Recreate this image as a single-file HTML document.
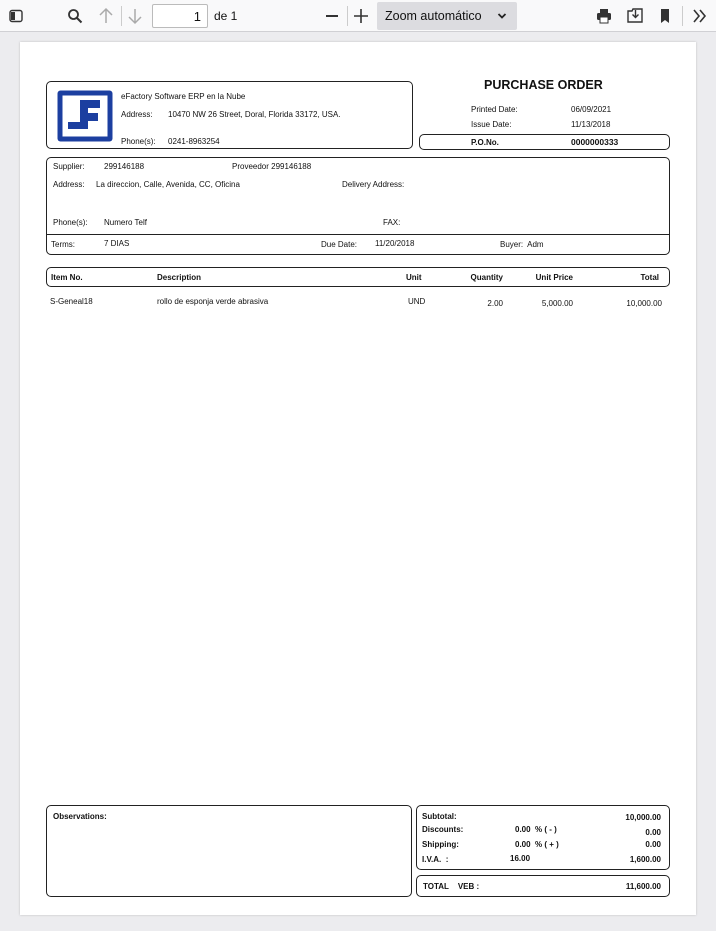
<!DOCTYPE html>
<html><head><meta charset="utf-8"><style>
*{margin:0;padding:0;box-sizing:border-box}
body{width:716px;height:931px;background:#ececef;font-family:"Liberation Sans",sans-serif;position:relative;overflow:hidden;color:#111}
.tb{position:absolute;left:0;top:0;width:716px;height:32px;background:#f9f9fa;border-bottom:1px solid #d0d0d4}
.pg{position:absolute;left:20px;top:42px;width:676px;height:873px;background:#fff;box-shadow:0 0 2px #bbb}
.a{position:absolute;white-space:nowrap;font-size:8px;line-height:9px}
.b{font-weight:bold}
.bx{position:absolute;border:1px solid #222;border-radius:5px}
.ic{position:absolute}
</style></head><body>
<div class="tb">
<svg class="ic" style="left:9px;top:9px" width="14" height="14"><rect x="1" y="1.5" width="12" height="11" rx="2" fill="none" stroke="#333" stroke-width="1.4"/><rect x="2" y="3" width="4" height="8" fill="#333"/></svg>
<svg class="ic" style="left:67px;top:8px" width="16" height="16"><circle cx="6.5" cy="6.5" r="4.5" fill="none" stroke="#333" stroke-width="1.8"/><path d="M10 10l4.5 4.5" stroke="#333" stroke-width="2"/></svg>
<svg class="ic" style="left:98px;top:7px" width="16" height="18"><path d="M8 16V2M2 8l6-6 6 6" fill="none" stroke="#aaa" stroke-width="1.5"/></svg>
<div class="ic" style="left:121px;top:6px;width:1px;height:20px;background:#ccc"></div>
<svg class="ic" style="left:127px;top:7px" width="16" height="18"><path d="M8 2v14M2 10l6 6 6-6" fill="none" stroke="#aaa" stroke-width="1.5"/></svg>
<div class="ic" style="left:152px;top:4px;width:56px;height:24px;background:#fff;border:1px solid #bbb;border-radius:2px;font-size:13px;text-align:right;padding:4px 6px 0 0">1</div>
<div class="ic" style="left:214px;top:9px;font-size:12px">de 1</div>
<div class="ic" style="left:326px;top:15px;width:12px;height:1.6px;background:#333"></div>
<div class="ic" style="left:347px;top:6px;width:1px;height:20px;background:#ccc"></div>
<svg class="ic" style="left:353px;top:8px" width="16" height="16"><path d="M8 1v14M1 8h14" stroke="#333" stroke-width="1.6"/></svg>
<div class="ic" style="left:377px;top:2px;width:140px;height:28px;background:#dcdce0;border-radius:2px;font-size:12.5px;padding:7px 0 0 8px">Zoom automático</div>
<svg class="ic" style="left:497px;top:12px" width="10" height="8"><path d="M1.5 2l3.5 3.5 3.5-3.5" fill="none" stroke="#222" stroke-width="1.8"/></svg>
<svg class="ic" style="left:596px;top:8px" width="16" height="16"><rect x="4" y="1" width="8" height="4" fill="#333"/><rect x="1" y="5" width="14" height="7" rx="1.5" fill="#333"/><rect x="4" y="9" width="8" height="6" fill="#fff" stroke="#333"/></svg>
<svg class="ic" style="left:627px;top:7px" width="17" height="17"><path d="M1 4h4l1 -2h9v13H1z" fill="none" stroke="#333" stroke-width="1.4"/><path d="M8.5 3v7M5.5 7.5l3 3 3-3" fill="none" stroke="#333" stroke-width="1.4"/></svg>
<svg class="ic" style="left:659px;top:8px" width="12" height="16"><path d="M2 1h8v14l-4-3-4 3z" fill="#333"/></svg>
<div class="ic" style="left:682px;top:6px;width:1px;height:20px;background:#ccc"></div>
<svg class="ic" style="left:692px;top:9px" width="16" height="14"><path d="M2 1l5 6-5 6M8 1l5 6-5 6" fill="none" stroke="#333" stroke-width="1.6"/></svg>
</div>

<div class="pg"></div>
<div class="bx" style="left:46px;top:81px;width:367px;height:68px"></div>
<svg class="ic" style="left:56px;top:89px" width="58" height="54"><rect x="1.5" y="1.5" width="55" height="51" rx="3" fill="#1c3fa0"/><rect x="6.5" y="6.5" width="45" height="41" fill="#fff"/><path d="M24 11h20v8H32v5h10v8H32v8H12v-7h12z" fill="#1c3fa0"/></svg>
<div class="a" style="left:121px;top:92px">eFactory Software ERP en la Nube</div>
<div class="a" style="left:121px;top:110px">Address:</div>
<div class="a" style="left:168px;top:110px">10470 NW 26 Street, Doral, Florida 33172, USA.</div>
<div class="a" style="left:121px;top:137px">Phone(s):</div>
<div class="a" style="left:168px;top:137px">0241-8963254</div>

<div class="a b" style="left:484px;top:78px;font-size:12.5px;line-height:15px">PURCHASE ORDER</div>
<div class="a" style="left:471px;top:105px">Printed Date:</div>
<div class="a" style="left:571px;top:105px">06/09/2021</div>
<div class="a" style="left:471px;top:120px">Issue Date:</div>
<div class="a" style="left:571px;top:120px">11/13/2018</div>
<div class="bx" style="left:419px;top:134px;width:251px;height:16px"></div>
<div class="a b" style="left:471px;top:138px">P.O.No.</div>
<div class="a b" style="left:571px;top:138px;font-size:8.5px">0000000333</div>

<div class="bx" style="left:46px;top:157px;width:624px;height:98px"></div>
<div class="ic" style="left:47px;top:234px;width:622px;height:1px;background:#222"></div>
<div class="a" style="left:53px;top:162px">Supplier:</div>
<div class="a" style="left:104px;top:162px">299146188</div>
<div class="a" style="left:232px;top:162px">Proveedor 299146188</div>
<div class="a" style="left:53px;top:180px">Address:</div>
<div class="a" style="left:96px;top:180px">La direccion, Calle, Avenida, CC, Oficina</div>
<div class="a" style="left:342px;top:180px">Delivery Address:</div>
<div class="a" style="left:53px;top:218px">Phone(s):</div>
<div class="a" style="left:104px;top:218px">Numero Telf</div>
<div class="a" style="left:383px;top:218px">FAX:</div>
<div class="a" style="left:51px;top:240px">Terms:</div>
<div class="a" style="left:104px;top:239px">7 DIAS</div>
<div class="a" style="left:321px;top:240px">Due Date:</div>
<div class="a" style="left:375px;top:239px">11/20/2018</div>
<div class="a" style="left:500px;top:240px">Buyer:&nbsp; Adm</div>

<div class="bx" style="left:46px;top:267px;width:624px;height:20px"></div>
<div class="a b" style="left:51px;top:273px">Item No.</div>
<div class="a b" style="left:157px;top:273px">Description</div>
<div class="a b" style="left:406px;top:273px">Unit</div>
<div class="a b" style="right:213px;top:273px">Quantity</div>
<div class="a b" style="right:143px;top:273px">Unit Price</div>
<div class="a b" style="right:57px;top:273px">Total</div>
<div class="a" style="left:50px;top:297px">S-Geneal18</div>
<div class="a" style="left:157px;top:297px">rollo de esponja verde abrasiva</div>
<div class="a" style="left:408px;top:297px">UND</div>
<div class="a" style="right:213px;top:299px">2.00</div>
<div class="a" style="right:143px;top:299px">5,000.00</div>
<div class="a" style="right:54px;top:299px">10,000.00</div>

<div class="bx" style="left:46px;top:805px;width:366px;height:92px"></div>
<div class="a b" style="left:53px;top:812px">Observations:</div>
<div class="bx" style="left:416px;top:805px;width:254px;height:65px"></div>
<div class="a b" style="left:422px;top:812px">Subtotal:</div>
<div class="a b" style="right:55px;top:813px">10,000.00</div>
<div class="a b" style="left:422px;top:825px">Discounts:</div>
<div class="a b" style="left:515px;top:825px">0.00&nbsp; % ( - )</div>
<div class="a b" style="right:55px;top:828px">0.00</div>
<div class="a b" style="left:422px;top:840px">Shipping:</div>
<div class="a b" style="left:515px;top:840px">0.00&nbsp; % ( + )</div>
<div class="a b" style="right:55px;top:840px">0.00</div>
<div class="a b" style="left:422px;top:855px">I.V.A.&nbsp; :</div>
<div class="a b" style="left:510px;top:854px">16.00</div>
<div class="a b" style="right:55px;top:855px">1,600.00</div>
<div class="bx" style="left:416px;top:875px;width:254px;height:22px"></div>
<div class="a b" style="left:423px;top:882px">TOTAL&nbsp;&nbsp;&nbsp; VEB :</div>
<div class="a b" style="right:55px;top:882px">11,600.00</div>
</body></html>
